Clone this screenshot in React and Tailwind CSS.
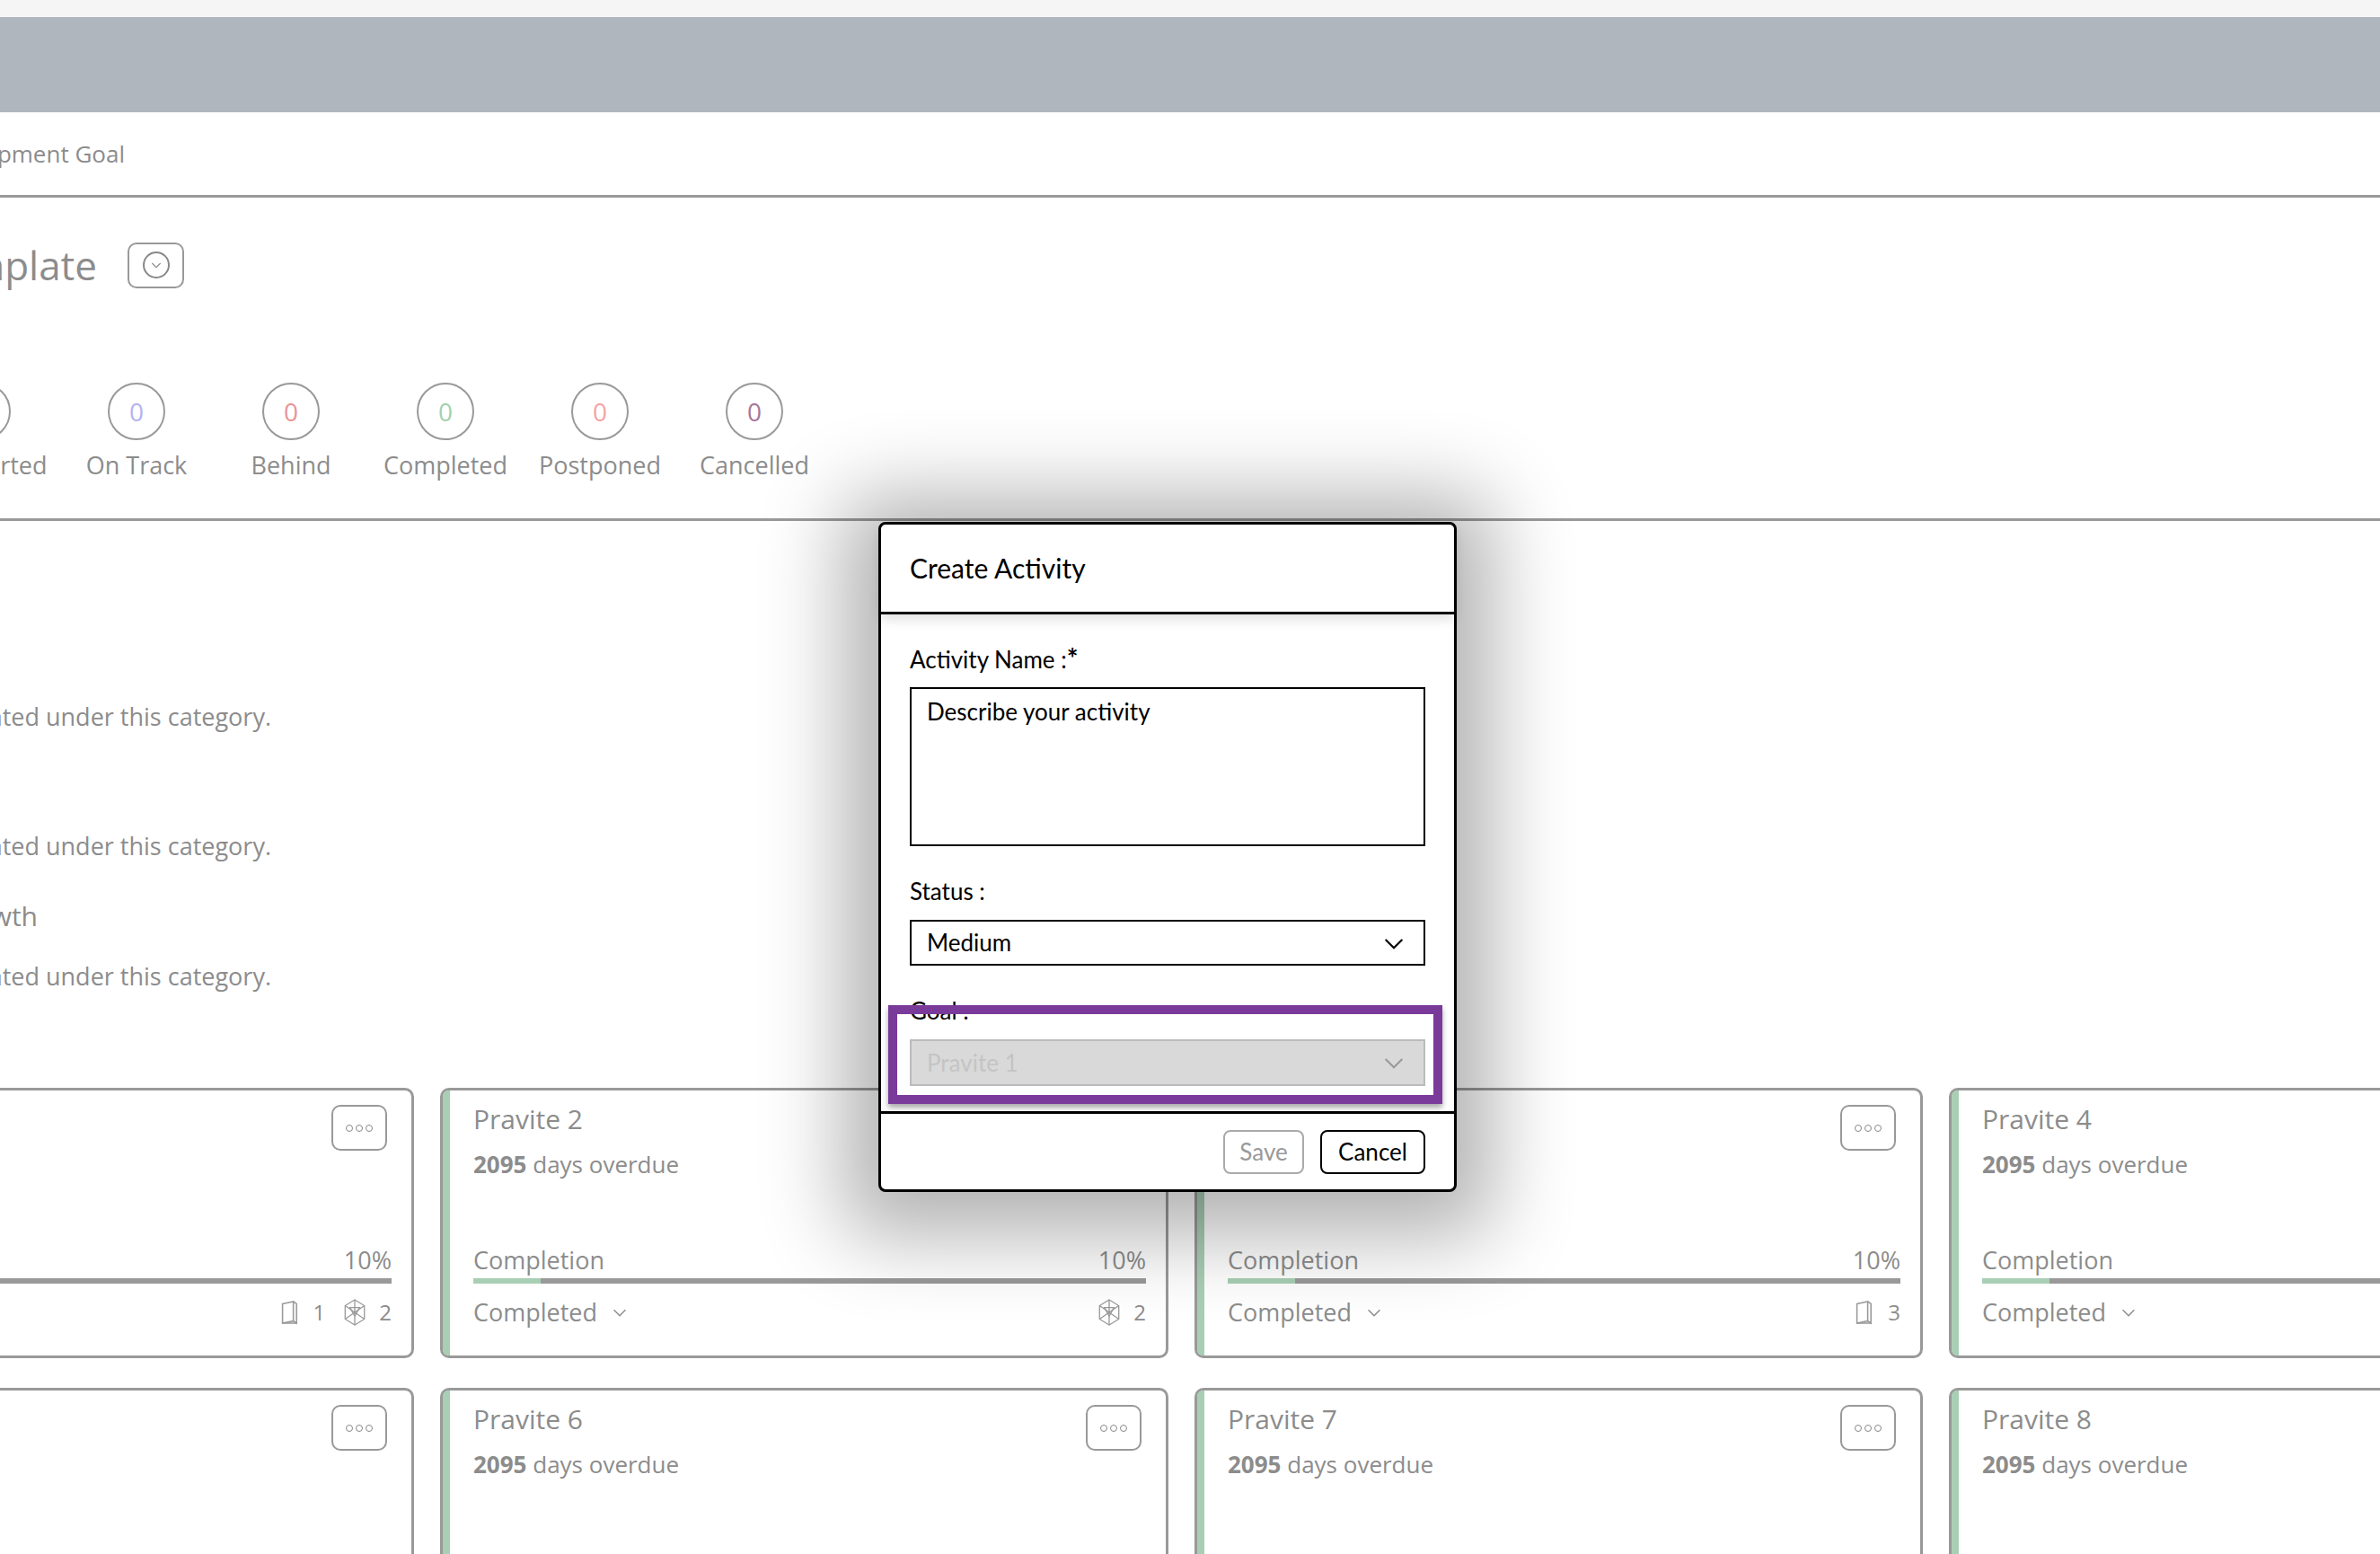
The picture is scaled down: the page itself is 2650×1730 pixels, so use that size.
import React from 'react';

const gray = 'text-[#8c8c8c]';

const Chevron = ({ className = '' }) => (
    <svg viewBox="0 0 24 24" className={className} fill="none" stroke="currentColor" strokeWidth="1.6">
        <path d="M5 9l7 7 7-7" />
    </svg>
);

const BookIcon = () => (
    <svg viewBox="0 0 20 24" className="w-[24px] h-[30px]" fill="none" stroke="#999" strokeWidth="1.3">
        <path d="M3 4l10-2v18L3 22z" />
        <path d="M13 2l3 2v18l-3-2" />
        <path d="M3 22h13" />
    </svg>
);

const CubeIcon = () => (
    <svg viewBox="0 0 24 28" className="w-[26px] h-[30px]" fill="none" stroke="#999" strokeWidth="1.2">
        <path d="M12 1l10 6v14l-10 6-10-6V7z" />
        <path d="M12 1v26M2 7l20 14M22 7L2 21" />
        <path d="M7 9h10l-5 9z" />
    </svg>
);

const statuses = [
    { label: 'Not Started', color: 'text-[#9a9a9a]' },
    { label: 'On Track', color: 'text-[#b3b3f2]' },
    { label: 'Behind', color: 'text-[#e89494]' },
    { label: 'Completed', color: 'text-[#a3d1ad]' },
    { label: 'Postponed', color: 'text-[#f4a3a3]' },
    { label: 'Cancelled', color: 'text-[#a5769a]' },
];

const Card = ({ title, icons, tall }) => (
    <div className={`relative w-[811px] shrink-0 ${tall ? 'h-[301px]' : 'h-[200px]'} border-[3px] border-[#999] rounded-[10px] bg-white flex`}>
        <div className="w-[8px] bg-[#a8cfb4] rounded-l-[6px]" />
        <div className="flex-1 pl-[26px] pr-[22px] pt-[12px] flex flex-col">
            <div className={`text-[30px] leading-[40px] ${gray}`}>{title}</div>
            <div className={`text-[26px] leading-[36px] mt-[12px] ${gray}`}><span className="font-bold">2095</span> days overdue</div>
            {tall && (
                <>
                    <div className={`flex justify-between text-[27px] leading-[34px] mt-[72px] ${gray}`}>
                        <span>Completion</span><span>10%</span>
                    </div>
                    <div className="h-[6px] bg-[#999] mt-[3px] flex">
                        <div className="w-[10%] bg-[#a8cfb4]" />
                    </div>
                    <div className={`flex justify-between items-center text-[27px] mt-[12px] ${gray}`}>
                        <span className="flex items-center gap-[14px]">Completed <Chevron className="w-[22px] h-[22px]" /></span>
                        <span className="flex items-center gap-[10px] text-[24px]">
                            {icons.map(([Icon, n], i) => (
                                <span key={i} className="flex items-center gap-[14px] ml-[10px]"><Icon />{n}</span>
                            ))}
                        </span>
                    </div>
                </>
            )}
        </div>
        {title !== 'Pravite 2' && title !== 'Pravite 4' && title !== 'Pravite 8' && (
            <div className="absolute right-[27px] top-[16px] w-[62px] h-[51px] border-2 border-[#999] rounded-[10px] flex items-center justify-center gap-[3px]">
                {[0, 1, 2].map(i => <span key={i} className="w-[8px] h-[8px] rounded-full border-[1.5px] border-[#888]" />)}
            </div>
        )}
    </div>
);

const RightText = ({ end, className, children }) => (
    <div className={`flex justify-end whitespace-nowrap ${className}`} style={{ width: end }}>{children}</div>
);

const App = () => {
    const row1 = [
        { title: 'Pravite 1', icons: [[BookIcon, 1], [CubeIcon, 2]] },
        { title: 'Pravite 2', icons: [[CubeIcon, 2]] },
        { title: 'Pravite 3', icons: [[BookIcon, 3]] },
        { title: 'Pravite 4', icons: [] },
    ];
    const row2 = ['Pravite 5', 'Pravite 6', 'Pravite 7', 'Pravite 8'];

    return (
        <div className="relative w-[2650px] h-[1730px] overflow-hidden bg-white" style={{ fontFamily: '"Open Sans", "Noto Sans", sans-serif' }}>
            <div className="h-[19px] bg-[#f5f5f5]" />
            <div className="h-[106px] bg-[#b0b6be]" />
            <div className="h-[95px] border-b-[3px] border-[#999] flex items-center">
                <RightText end="139px" className={`text-[26px] ${gray}`}>Development Goal</RightText>
            </div>
            <div className="flex items-center gap-[34px] pt-[47px]">
                <RightText end="108px" className={`text-[44px] leading-[56px] ${gray}`}>Development Plan Template</RightText>
                <div className="w-[63px] h-[51px] border-2 border-[#999] rounded-[10px] flex items-center justify-center">
                    <div className="w-[30px] h-[30px] rounded-full border-2 border-[#888] flex items-center justify-center text-[#888]">
                        <Chevron className="w-[16px] h-[16px]" />
                    </div>
                </div>
            </div>
            <div className="flex ml-[-106px] mt-[103px] h-[154px] border-b-[3px] border-[#999]">
                {statuses.map(s => (
                    <div key={s.label} className="w-[172px] flex flex-col items-center">
                        <div className={`w-[64px] h-[64px] rounded-full border-2 border-[#999] flex items-center justify-center text-[28px] ${s.color}`}>0</div>
                        <div className={`text-[27px] mt-[8px] ${gray}`}>{s.label}</div>
                    </div>
                ))}
            </div>
            <div className={`text-[27px] ${gray}`}>
                <RightText end="302px" className="mt-[200px] leading-[36px]">No activities created under this category.</RightText>
                <RightText end="302px" className="mt-[108px] leading-[36px]">No activities created under this category.</RightText>
                <RightText end="42px" className="mt-[40px] text-[30px] leading-[40px]">Personal Growth</RightText>
                <RightText end="302px" className="mt-[29px] leading-[36px]">No activities created under this category.</RightText>
            </div>
            <div className="ml-[-350px] mt-[106px] flex gap-[29px]">
                {row1.map(c => <Card key={c.title} title={c.title} icons={c.icons} tall />)}
            </div>
            <div className="ml-[-350px] mt-[33px] flex gap-[29px]">
                {row2.map(t => <Card key={t} title={t} icons={[]} />)}
            </div>

            <div className="absolute left-[978px] top-[581px] w-[644px] h-[746px] bg-white border-[3px] border-black rounded-[8px] shadow-[0_10px_90px_40px_rgba(0,0,0,0.3)] flex flex-col" style={{ fontFamily: 'Lato, "Open Sans", sans-serif' }}>
                <div className="h-[100px] shrink-0 border-b-[3px] border-black flex items-center px-[32px] text-[30px] text-black shadow-[0_6px_12px_rgba(0,0,0,0.12)]">Create Activity</div>
                <div className="relative flex-1 px-[32px] pt-[32px] text-black">
                    <div className="text-[26px] leading-[32px]">Activity Name :<span className="font-bold text-[30px]">*</span></div>
                    <div className="mt-[15px] h-[177px] border-2 border-black px-[17px] pt-[6px] text-[26px]">Describe your activity</div>
                    <div className="mt-[34px] text-[26px] leading-[32px]">Status :</div>
                    <div className="mt-[16px] h-[51px] border-2 border-black px-[17px] flex items-center justify-between text-[26px]">
                        Medium <Chevron className="w-[32px] h-[32px]" />
                    </div>
                    <div className="mt-[34px] text-[26px] leading-[32px]">Goal :</div>
                    <div className="mt-[16px] h-[52px] border-2 border-[#bbb] bg-[#d9d9d9] px-[17px] flex items-center justify-between text-[26px] text-[#c4c4c4]">
                        Pravite 1 <Chevron className="w-[32px] h-[32px] text-[#999]" />
                    </div>
                    <div className="absolute left-[8px] top-[435px] w-[617px] h-[110px] border-[10px] border-[#7a3a9a] shadow-[0_4px_6px_rgba(0,0,0,0.35)]" />
                </div>
                <div className="h-[87px] shrink-0 border-t-[3px] border-black flex items-center justify-end gap-[18px] px-[32px]">
                    <div className="w-[90px] h-[49px] border-2 border-[#aaa] rounded-[8px] flex items-center justify-center text-[26px] text-[#999]">Save</div>
                    <div className="w-[117px] h-[49px] border-2 border-black rounded-[8px] flex items-center justify-center text-[26px] text-black">Cancel</div>
                </div>
            </div>
        </div>
    );
};

export default App;
